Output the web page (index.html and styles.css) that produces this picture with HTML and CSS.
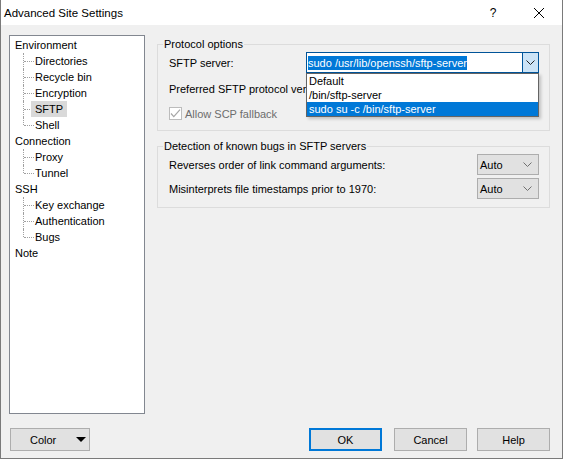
FILE: index.html
```html
<!DOCTYPE html>
<html lang="en">
<head>
    <meta charset="UTF-8">
    <meta name="viewport" content="width=device-width, initial-scale=1.0">
    <title>Advanced Site Settings</title>
    <link rel="stylesheet" href="styles.css">
</head>
<body>
    <div class="window">
        <div class="titlebar">
            <span class="title">Advanced Site Settings</span>
            <div class="caption-buttons">
                <span class="caption-btn">?</span>
                <span class="caption-btn">
                    <svg width="10" height="10" viewBox="0 0 10 10"><path d="M0 0L10 10M10 0L0 10" stroke="#000" stroke-width="1"/></svg>
                </span>
            </div>
        </div>

        <div class="dialog">
            <div class="main">
                <div class="tree">
                    <div class="node">Environment</div>
                    <ul class="children">
                        <li><span class="label">Directories</span></li>
                        <li><span class="label">Recycle bin</span></li>
                        <li><span class="label">Encryption</span></li>
                        <li><span class="label selected">SFTP</span></li>
                        <li><span class="label">Shell</span></li>
                    </ul>
                    <div class="node">Connection</div>
                    <ul class="children">
                        <li><span class="label">Proxy</span></li>
                        <li><span class="label">Tunnel</span></li>
                    </ul>
                    <div class="node">SSH</div>
                    <ul class="children">
                        <li><span class="label">Key exchange</span></li>
                        <li><span class="label">Authentication</span></li>
                        <li><span class="label">Bugs</span></li>
                    </ul>
                    <div class="node">Note</div>
                </div>

                <div class="pages">
                    <fieldset class="group protocol">
                        <legend>Protocol options</legend>
                        <div class="row">
                            <span>SFTP server:</span>
                            <div class="combo edit">
                                <span class="combo-text"><span class="sel-text">sudo /usr/lib/openssh/sftp-server</span></span>
                                <span class="combo-btn">
                                    <svg width="9" height="5" viewBox="0 0 9 5"><path d="M0.5 0.5L4.5 4.5L8.5 0.5" fill="none" stroke="#222"/></svg>
                                </span>
                                <ul class="combo-list">
                                    <li>Default</li>
                                    <li>/bin/sftp-server</li>
                                    <li class="current">sudo su -c /bin/sftp-server</li>
                                </ul>
                            </div>
                        </div>
                        <div class="row second">
                            <span class="under-list">Preferred SFTP protocol version:</span>
                        </div>
                        <label class="check disabled">
                            <svg width="13" height="13" viewBox="0 0 13 13">
                                <rect x="0.5" y="0.5" width="12" height="12" fill="#fff" stroke="#bcbcbc"/>
                                <path d="M2 6.5L4.8 9.6L11 2.6" fill="none" stroke="#a6a6a6" stroke-width="1.2"/>
                            </svg>
                            <span>Allow SCP fallback</span>
                        </label>
                    </fieldset>

                    <fieldset class="group bugs">
                        <legend>Detection of known bugs in SFTP servers</legend>
                        <div class="row">
                            <span>Reverses order of link command arguments:</span>
                            <div class="combo small">
                                <span>Auto</span>
                                <svg width="9" height="5" viewBox="0 0 9 5"><path d="M0.5 0.5L4.5 4.5L8.5 0.5" fill="none" stroke="#707070"/></svg>
                            </div>
                        </div>
                        <div class="row next">
                            <span>Misinterprets file timestamps prior to 1970:</span>
                            <div class="combo small">
                                <span>Auto</span>
                                <svg width="9" height="5" viewBox="0 0 9 5"><path d="M0.5 0.5L4.5 4.5L8.5 0.5" fill="none" stroke="#707070"/></svg>
                            </div>
                        </div>
                    </fieldset>
                </div>
            </div>

            <div class="buttons">
                <button class="btn color-btn">
                    <span>Color</span>
                    <svg width="10" height="5" viewBox="0 0 10 5"><path d="M0 0H10L5 5Z" fill="#000"/></svg>
                </button>
                <button class="btn default ok">OK</button>
                <button class="btn cancel">Cancel</button>
                <button class="btn help">Help</button>
            </div>
        </div>
    </div>
</body>
</html>
```

FILE: styles.css
```css
body {
    margin: 0;
    font-family: "Liberation Sans", Arial, sans-serif;
    font-size: 11px;
    color: #000;
    background-color: #fff;
}
.window {
    width: 563px;
    height: 459px;
    box-sizing: border-box;
    border: 1px solid #7a7a7a;
    border-top: none;
    display: flex;
    flex-direction: column;
}

/* title bar */
.titlebar {
    height: 25px;
    background-color: #fff;
    display: flex;
    align-items: center;
}
.title {
    padding-left: 3px;
    padding-top: 1px;
    font-size: 11.5px;
}
.caption-buttons {
    margin-left: auto;
    display: flex;
    height: 100%;
}
.caption-btn {
    width: 46px;
    display: flex;
    align-items: center;
    justify-content: center;
    padding-top: 1px;
    font-size: 12px;
}

/* dialog body */
.dialog {
    flex: 1;
    background-color: #f0f0f0;
    padding: 10px 12px 7px 8px;
    display: flex;
    flex-direction: column;
}
.main {
    height: 379px;
    display: flex;
}

/* navigation tree */
.tree {
    width: 136px;
    box-sizing: border-box;
    border: 1px solid #828790;
    background-color: #fff;
    padding-top: 1px;
}
.node {
    height: 16px;
    line-height: 16px;
    padding-left: 5px;
}
.children {
    list-style: none;
    margin: 0 0 0 13px;
    padding: 0;
}
.children li {
    position: relative;
    height: 16px;
    line-height: 16px;
    padding-left: 8px;
}
.children li::before {
    content: '';
    position: absolute;
    left: 0;
    top: 0;
    bottom: 0;
    border-left: 1px dotted #a0a0a0;
}
.children li:last-child::before {
    bottom: 8px;
}
.children li::after {
    content: '';
    position: absolute;
    left: 1px;
    top: 8px;
    width: 10px;
    border-top: 1px dotted #a0a0a0;
}
.label {
    position: relative;
    z-index: 1;
    display: inline-block;
    padding: 0 4px;
}
.label.selected {
    background-color: #d9d9d9;
}

/* option pages */
.pages {
    flex: 1;
    margin-left: 12px;
    padding-top: 2px;
}
.group {
    margin: 0;
    min-width: 0;
    border: 1px solid #dcdcdc;
    padding: 0 10px 0 11px;
}
.group legend {
    margin-left: -6px;
    padding: 0 1px;
    line-height: 15px;
}
.protocol {
    padding-bottom: 10px;
}
.bugs {
    margin-top: 8px;
    padding-bottom: 8px;
}
.row {
    height: 21px;
    display: flex;
    align-items: center;
    justify-content: space-between;
}
.row.second {
    margin-top: 5px;
}
.row.next {
    margin-top: 3px;
}
/* the open drop-down list hides the end of this label */
.under-list {
    width: 137px;
    overflow: hidden;
    white-space: nowrap;
}

/* combo boxes */
.combo {
    box-sizing: border-box;
    height: 21px;
    display: flex;
    align-items: center;
}
.combo.edit {
    position: relative;
    width: 233px;
    border: 1px solid #005499;
    background-color: #fff;
}
.combo-text {
    flex: 1;
    padding-left: 1px;
}
.sel-text {
    display: inline-block;
    height: 14px;
    line-height: 14px;
    background-color: #0078d7;
    color: #fff;
}
.combo-btn {
    width: 15px;
    height: 100%;
    border-left: 1px solid #005499;
    background-color: #cce4f7;
    display: flex;
    align-items: center;
    justify-content: center;
}
.combo-list {
    position: absolute;
    left: -1px;
    right: -1px;
    top: calc(100% + 1px);
    z-index: 2;
    margin: 0;
    padding: 0;
    list-style: none;
    border: 1px solid #646464;
    background-color: #fff;
    box-shadow: 2px 2px 3px rgba(0, 0, 0, 0.2);
}
.combo-list li {
    height: 14px;
    line-height: 14px;
    padding-left: 2px;
}
.combo-list li.current {
    background-color: #0078d7;
    color: #fff;
}
.combo.small {
    width: 62px;
    border: 1px solid #adadad;
    background-color: #e1e1e1;
    padding: 0 6px 0 2px;
    justify-content: space-between;
}

/* check box */
.check {
    margin-top: 8px;
    height: 13px;
    display: flex;
    align-items: center;
}
.check svg {
    margin-right: 3px;
}
.check.disabled {
    color: #6d6d6d;
}

/* bottom buttons */
.buttons {
    margin-top: 14px;
    display: flex;
}
.btn {
    box-sizing: border-box;
    height: 23px;
    width: 73px;
    padding: 0;
    font-family: inherit;
    font-size: 11px;
    color: #000;
    background-color: #e1e1e1;
    border: 1px solid #adadad;
}
.color-btn {
    width: 80px;
    margin-left: 1px;
    display: flex;
    align-items: center;
    padding: 0 3px 0 19px;
    justify-content: space-between;
}
.btn.default {
    border: 2px solid #0078d7;
}
.ok {
    margin-left: auto;
}
.cancel {
    margin-left: 12px;
}
.help {
    margin-left: 10px;
}
```
